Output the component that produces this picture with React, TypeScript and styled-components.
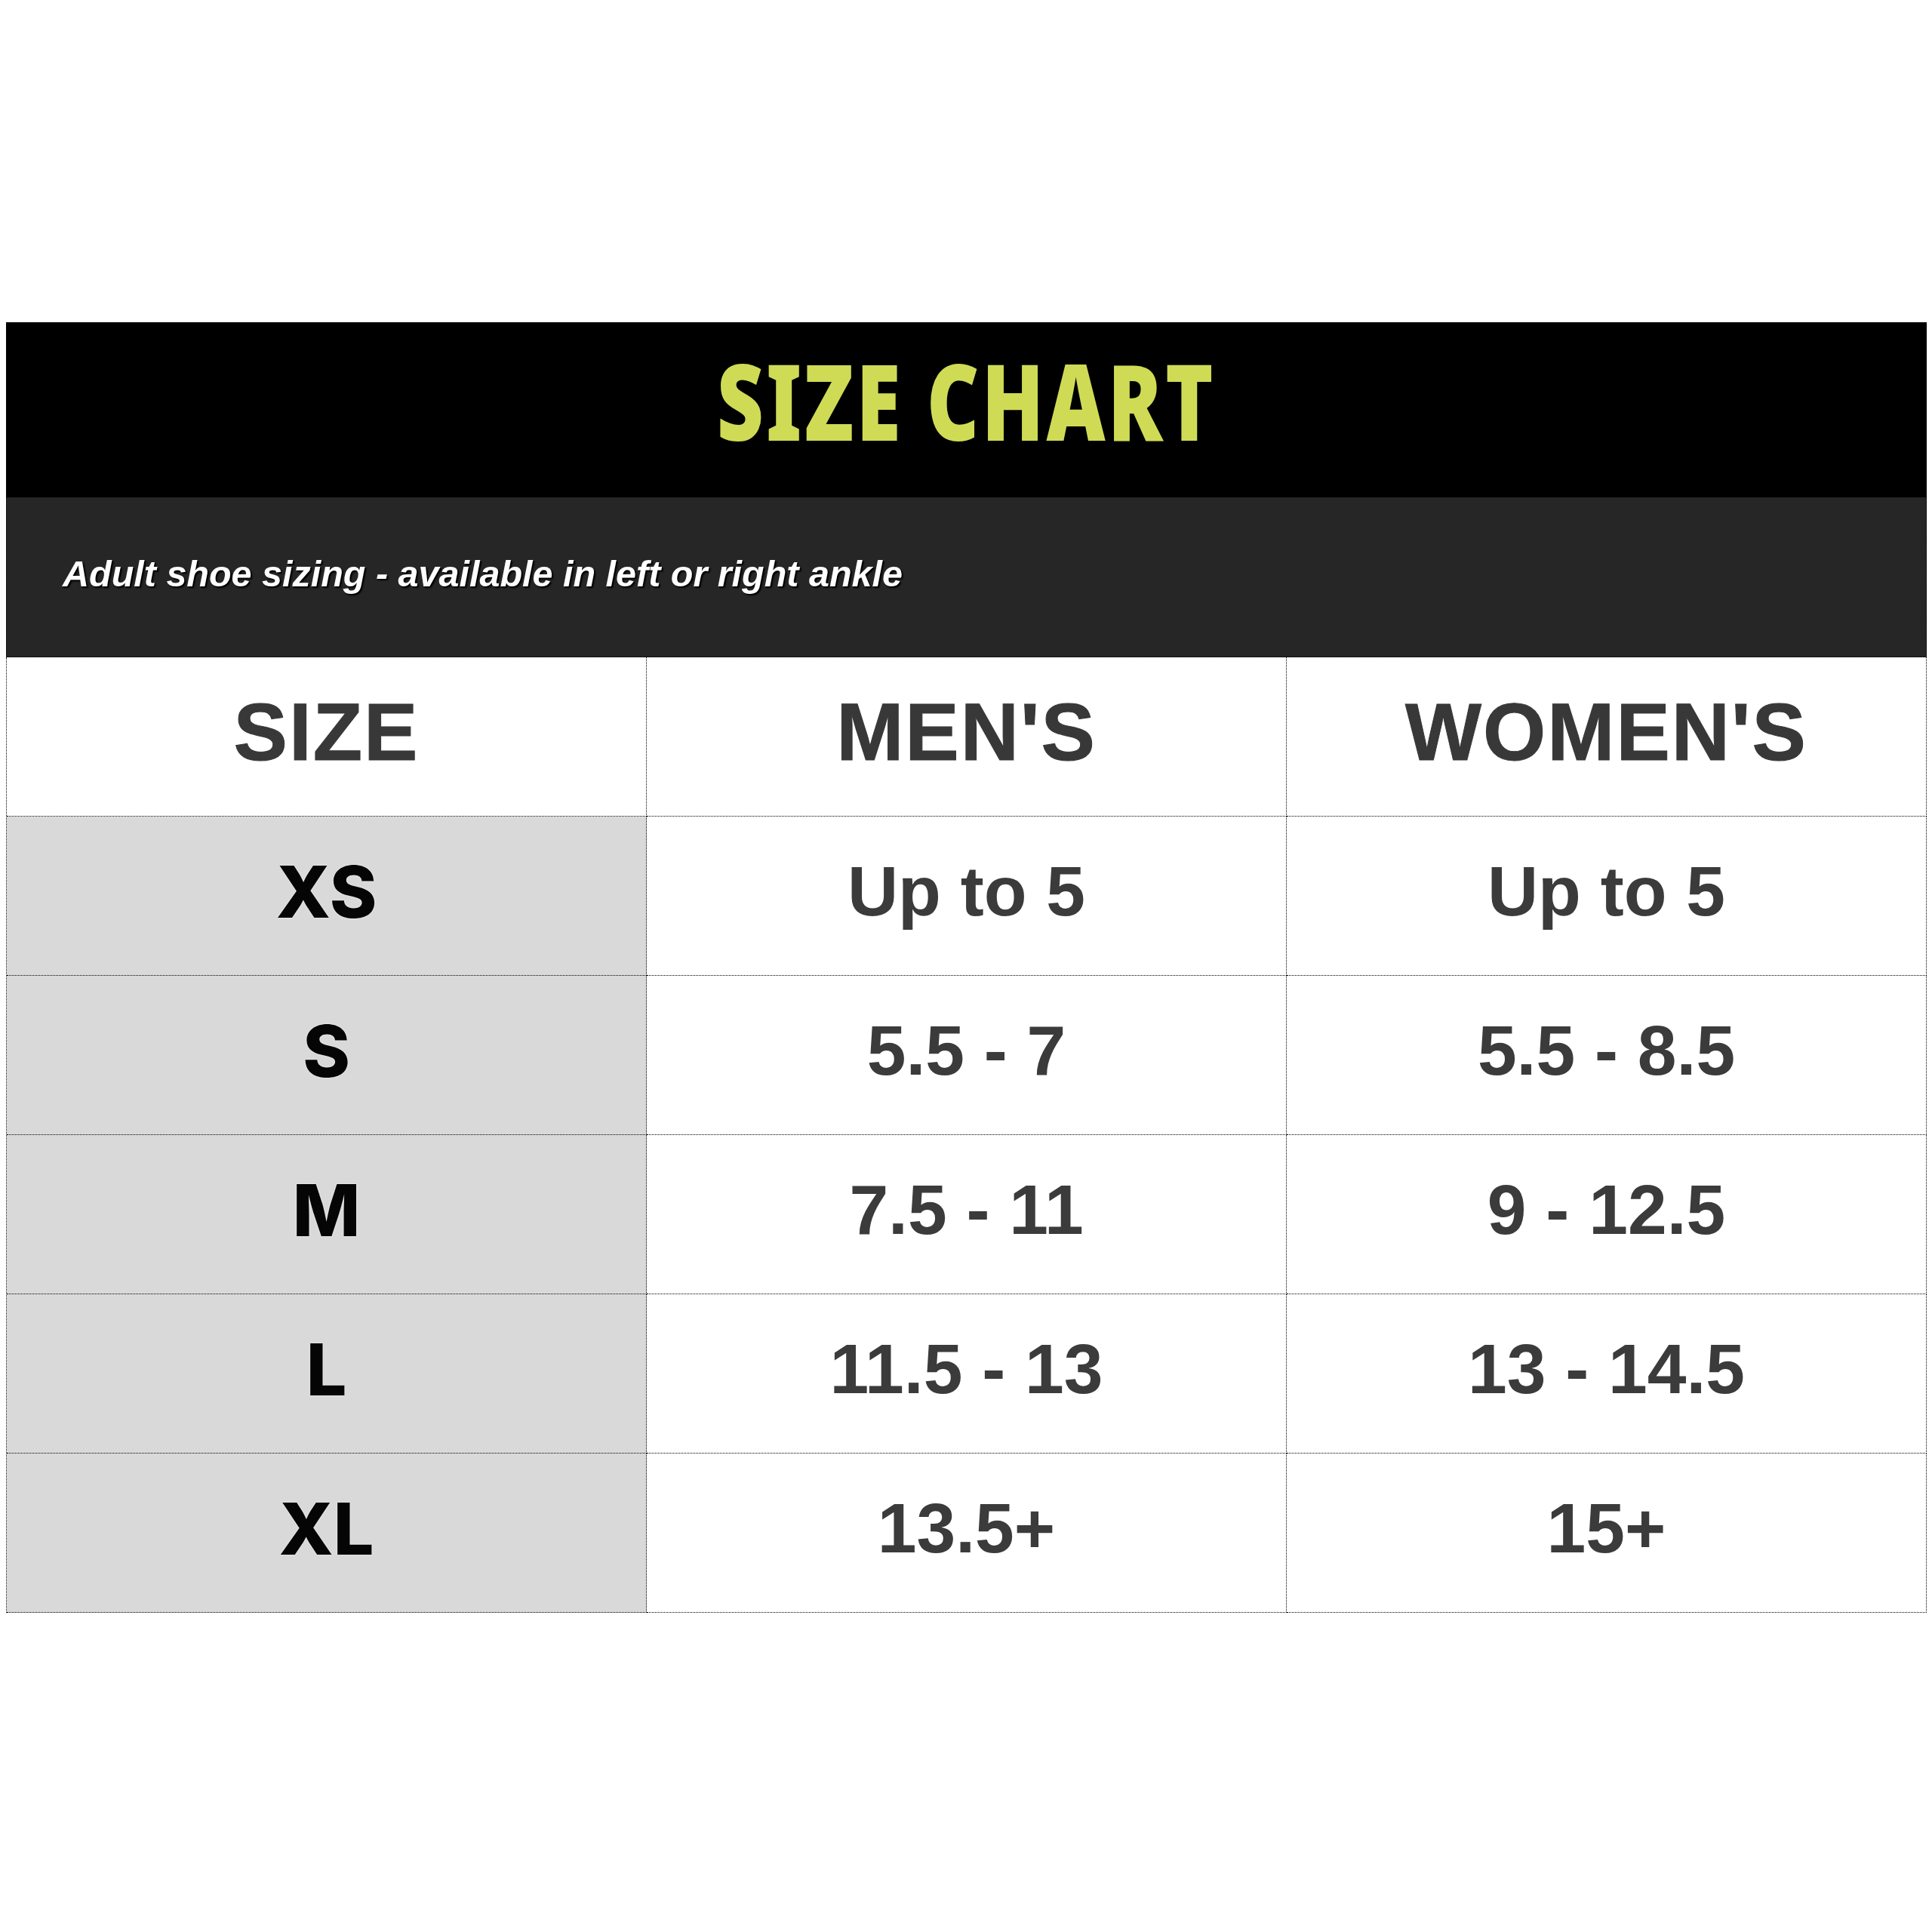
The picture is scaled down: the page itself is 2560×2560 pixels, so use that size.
import React from "react";
import styled, { createGlobalStyle } from "styled-components";

const Global = createGlobalStyle`
  html, body { margin: 0; padding: 0; background: #ffffff; }
  body { width: 2560px; height: 2560px; }
`;

const Page = styled.div`
  width: 2560px;
  height: 2560px;
  box-sizing: border-box;
  padding: 427px 0 0 8px;
  background: #ffffff;
`;

const Chart = styled.div`
  width: 2545px;
  display: flex;
  flex-direction: column;
`;

const TitleBar = styled.div`
  height: 232px;
  background: #000000;
  display: flex;
  align-items: center;
  justify-content: center;
  padding-bottom: 26px;
  box-sizing: border-box;
`;

const Title = styled.h1`
  margin: 0;
  display: inline-block;
  font-family: "Noto Sans", "Liberation Sans", sans-serif;
  font-weight: 900;
  font-size: 140px;
  line-height: 1;
  color: #cfdb55;
  letter-spacing: 4px;
  transform: scaleX(0.77);
  transform-origin: center;
`;

const SubBar = styled.div`
  height: 212px;
  box-sizing: border-box;
  background: #262626;
  border-left: 1px dotted #000;
  border-right: 1px dotted #000;
  border-bottom: 1px dotted #000;
  display: flex;
  align-items: center;
  padding: 0 0 10px 74px;
`;

const Subtitle = styled.p`
  margin: 0;
  font-family: "Liberation Sans", Arial, sans-serif;
  font-weight: 700;
  font-style: italic;
  font-size: 48.5px;
  color: #ffffff;
  text-shadow: 2px 2px 2px #000, 1px 1px 0 #000;
`;

const Table = styled.div`
  display: grid;
  grid-template-columns: repeat(3, 848px);
  grid-auto-rows: 211px;
  border-left: 1px dotted #000;
`;

const Cell = styled.div<{ $shade?: boolean }>`
  box-sizing: border-box;
  border-right: 1px dotted #000;
  border-bottom: 1px dotted #000;
  background: ${(p) => (p.$shade ? "#d9d9d9" : "#ffffff")};
  display: flex;
  align-items: center;
  justify-content: center;
  padding-bottom: 12px;
`;

const HeadText = styled.span`
  font-family: "Liberation Sans", Arial, sans-serif;
  font-weight: 700;
  font-size: 107px;
  letter-spacing: 2px;
  color: #383838;
  -webkit-text-stroke: 1px #383838;
`;

const SizeText = styled.span`
  font-family: Inter, "Liberation Sans", sans-serif;
  font-weight: 800;
  font-size: 95px;
  color: #050505;
  text-shadow: 0 0 2px #ffffff;
`;

const ValueText = styled.span`
  font-family: "Liberation Sans", Arial, sans-serif;
  font-weight: 700;
  font-size: 93px;
  color: #3b3b3b;
`;

const rows = [
  ["XS", "Up to 5", "Up to 5"],
  ["S", "5.5 - 7", "5.5 - 8.5"],
  ["M", "7.5 - 11", "9 - 12.5"],
  ["L", "11.5 - 13", "13 - 14.5"],
  ["XL", "13.5+", "15+"],
];

export default function App() {
  return (
    <>
      <Global />
      <Page>
        <Chart>
          <TitleBar>
            <Title>SIZE CHART</Title>
          </TitleBar>
          <SubBar>
            <Subtitle>Adult shoe sizing - available in left or right ankle</Subtitle>
          </SubBar>
          <Table>
            <Cell><HeadText>SIZE</HeadText></Cell>
            <Cell><HeadText>MEN'S</HeadText></Cell>
            <Cell><HeadText>WOMEN'S</HeadText></Cell>
            {rows.map(([size, men, women]) => (
              <React.Fragment key={size}>
                <Cell $shade><SizeText>{size}</SizeText></Cell>
                <Cell><ValueText>{men}</ValueText></Cell>
                <Cell><ValueText>{women}</ValueText></Cell>
              </React.Fragment>
            ))}
          </Table>
        </Chart>
      </Page>
    </>
  );
}
